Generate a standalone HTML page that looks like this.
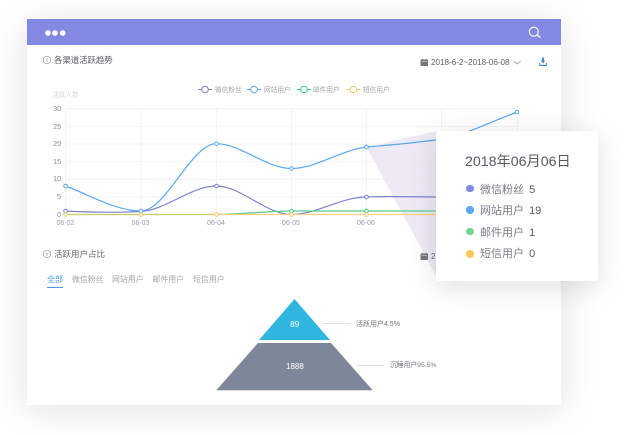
<!DOCTYPE html>
<html><head><meta charset="utf-8">
<style>
html,body{margin:0;padding:0;background:#fff}
#s{position:relative;width:640px;height:435px;overflow:hidden;background:#fff;font-family:"Liberation Sans","Noto Sans CJK SC",sans-serif}
#card{position:absolute;left:27px;top:19px;width:534px;height:386px;background:#fff;box-shadow:0 5px 36px rgba(0,0,0,.12)}
#head{position:absolute;left:27px;top:19px;width:534px;height:26px;background:#8389e3}
svg{position:absolute;left:0;top:0}
#tip{position:absolute;left:436px;top:131px;width:162px;height:150px;background:#fff;border-radius:2px;box-shadow:0 6px 28px rgba(0,0,0,.13)}
.t{position:absolute;white-space:nowrap;line-height:1}
.r{position:absolute;font-size:11px;color:#7a7d87;white-space:nowrap;line-height:16px}
.r b{font-weight:400;color:#565a66;margin-left:2px}
.d{position:absolute;left:30px;width:7.5px;height:7.5px;border-radius:50%}
</style></head><body>
<div id="s">
<div id="card"></div>
<div id="head"></div>
<svg width="640" height="435" viewBox="0 0 640 435" fill="none">
<!-- header -->
<circle cx="48" cy="33" r="2.8" fill="#fff"/><circle cx="55" cy="33" r="2.8" fill="#fff"/><circle cx="62.700" cy="33" r="2.8" fill="#fff"/>
<circle cx="533.800" cy="31.700" r="4.500" stroke="#fff" stroke-width="1.100"/><path d="M537.200 35.200l3.300 2.300" stroke="#fff" stroke-width="1.300"/>
<!-- info icons -->
<circle cx="47" cy="60" r="3.700" stroke="#9a9a9a" stroke-width=".7"/><path d="M47 58.500v3.200" stroke="#888" stroke-width=".7"/>
<circle cx="47" cy="254" r="3.700" stroke="#9a9a9a" stroke-width=".7"/><path d="M47 252.500v3.200" stroke="#888" stroke-width=".7"/>
<!-- calendar -->
<rect x="420.500" y="59.500" width="7.500" height="6.500" rx=".6" fill="#75757a"/><path d="M421.500 61.500h5.500" stroke="#ddd" stroke-width=".6"/><path d="M422.300 58.600v1.500M426.300 58.600v1.500" stroke="#75757a" stroke-width=".8"/>
<path d="M514 61l3.300 3 3.300-3" stroke="#8a8a8e" stroke-width=".8"/>
<!-- download -->
<path d="M543 57.500v4.500" stroke="#3f8fdc" stroke-width="2"/><path d="M540.600 60.500h4.800L543 63.500z" fill="#3f8fdc"/><path d="M539.700 63v2.400h6.600V63" stroke="#3f8fdc" stroke-width="1.100"/>
<!-- legend -->
<g stroke-width="1">
<path d="M198 89.500h4M208 89.500h4" stroke="#7e82cf"/><circle cx="205" cy="89.500" r="3.300" stroke="#7e82cf" fill="#fff"/>
<path d="M247 89.500h4M257 89.500h4" stroke="#5aa9f2"/><circle cx="254" cy="89.500" r="3.300" stroke="#5aa9f2" fill="#fff"/>
<path d="M297 89.500h4M307 89.500h4" stroke="#3ecf85"/><circle cx="304" cy="89.500" r="3.300" stroke="#3ecf85" fill="#fff"/>
<path d="M346.500 89.500h4M356.500 89.500h4" stroke="#f5c663"/><circle cx="353.500" cy="89.500" r="3.300" stroke="#f5c663" fill="#fff"/>
</g>
<!-- grid -->
<g stroke="#f3f3f5" stroke-width="1">
<path d="M65.500 108.500H517.500M65.500 126.500H517.500M65.500 144H517.500M65.500 161.500H517.500M65.500 179.500H517.500M65.500 197H517.500"/>
<path d="M65.500 108.500V214.500M141 108.500V214.500M216.500 108.500V214.500M291.500 108.500V214.500M366.500 108.500V214.500M441.500 108.500V214.500M517.500 108.500V214.500"/>
</g>
<path d="M65 214.500H518" stroke="#e6e6ea" stroke-width="1"/>
<!-- wedge -->
<path d="M366.500 147L437 131V278z" fill="#e6e2f3" fill-opacity=".72"/>
<!-- lines -->
<path d="M65.500 211c25 1.500 50 1.500 75.500 .5C166 210 191 186 216.500 186C241 186 266 214.500 291.500 214.500C316 214.500 341 197 366.500 197C391 196 416 197 441.500 197" stroke="#7e82cf" stroke-width="1.200"/>
<path d="M65.500 186C90 195 116 211 141 211C166 211 191 143.700 216.500 143.700C241 143.700 266 168.500 291.500 168.500C316 168.500 341 150 366.500 147C391 145 416 143 441.500 139C466 135 492 121 517.500 112" stroke="#5aa9f2" stroke-width="1.200"/>
<path d="M216.500 214.500C241 214.500 266 211 291.500 211H520" stroke="#56d08e" stroke-width="1.300"/>
<path d="M65.500 214.500H520" stroke="#f7cf7e" stroke-width="1.200"/>
<path d="M65.500 214.500H216.500" stroke="#c4d468" stroke-width="1.200"/>
<!-- markers -->
<g fill="#fff" stroke-width="1">
<circle cx="65.500" cy="211" r="1.800" stroke="#7e82cf"/><circle cx="216.500" cy="186" r="1.800" stroke="#7e82cf"/><circle cx="366.500" cy="197" r="1.800" stroke="#7e82cf"/>
<circle cx="65.500" cy="186" r="1.800" stroke="#5aa9f2"/><circle cx="141" cy="211" r="1.800" stroke="#5aa9f2"/><circle cx="216.500" cy="143.700" r="1.800" stroke="#5aa9f2"/><circle cx="291.500" cy="168.500" r="1.800" stroke="#5aa9f2"/><circle cx="366.500" cy="147" r="1.800" stroke="#5aa9f2"/><circle cx="517" cy="112" r="1.800" stroke="#5aa9f2"/>
<circle cx="291.500" cy="211" r="1.800" stroke="#3ecf85"/><circle cx="366.500" cy="211" r="1.800" stroke="#3ecf85"/>
<circle cx="65.500" cy="214.500" r="1.800" stroke="#f5c663"/><circle cx="141" cy="214.500" r="1.800" stroke="#f5c663"/><circle cx="216.500" cy="214.500" r="1.800" stroke="#f5c663"/><circle cx="291.500" cy="214.500" r="1.800" stroke="#f5c663"/><circle cx="366.500" cy="214.500" r="1.800" stroke="#f5c663"/>
</g>
<!-- second calendar -->
<rect x="420.500" y="253.500" width="7.500" height="6.500" rx=".6" fill="#75757a"/><path d="M421.500 255.500h5.500" stroke="#ddd" stroke-width=".6"/><path d="M422.300 252.600v1.500M426.300 252.600v1.500" stroke="#75757a" stroke-width=".8"/>
<!-- tab underline -->
<path d="M47 287.500H63" stroke="#4c9be8" stroke-width="1"/>
<!-- pyramid -->
<path d="M294.500 299L330 340H259z" fill="#2fb6df"/>
<path d="M258 343H331L372.500 390H216.500z" fill="#7d8799"/>
<path d="M216.500 390.500H372.500" stroke="#aeb6ca" stroke-width=".6"/>
<path d="M323 323.500H351M357 365.500H384" stroke="#dedede" stroke-width="1"/>
</svg>
<div class="t" style="left:54px;top:56px;font-size:8.400px;color:#55585f">各渠道活跃趋势</div>
<div class="t" style="left:431px;top:59px;font-size:8.100px;color:#5e6068">2018-6-2~2018-06-08</div>
<div class="t" style="left:215px;top:87.500px;font-size:6.700px;color:#a3a5ab">微信粉丝</div>
<div class="t" style="left:264px;top:87.500px;font-size:6.700px;color:#a3a5ab">网站用户</div>
<div class="t" style="left:313px;top:87.500px;font-size:6.700px;color:#a3a5ab">邮件用户</div>
<div class="t" style="left:363px;top:87.500px;font-size:6.700px;color:#a3a5ab">短信用户</div>
<div class="t" style="left:52px;top:93px;font-size:6.700px;color:#d4d5da">活跃人数</div>
<div class="t" style="left:53px;top:105px;font-size:7.500px;color:#8c8f98">30</div>
<div class="t" style="left:53px;top:122.500px;font-size:7.500px;color:#8c8f98">25</div>
<div class="t" style="left:53px;top:140px;font-size:7.500px;color:#8c8f98">20</div>
<div class="t" style="left:53px;top:157.500px;font-size:7.500px;color:#8c8f98">15</div>
<div class="t" style="left:53px;top:175px;font-size:7.500px;color:#8c8f98">10</div>
<div class="t" style="left:57px;top:193px;font-size:7.500px;color:#8c8f98">5</div>
<div class="t" style="left:57px;top:210.500px;font-size:7.500px;color:#8c8f98">0</div>
<div class="t" style="left:56.500px;top:219.500px;font-size:7px;color:#9a9da6">06-02</div>
<div class="t" style="left:131.500px;top:219.500px;font-size:7px;color:#9a9da6">06-03</div>
<div class="t" style="left:207px;top:219.500px;font-size:7px;color:#9a9da6">06-04</div>
<div class="t" style="left:282px;top:219.500px;font-size:7px;color:#9a9da6">06-05</div>
<div class="t" style="left:357px;top:219.500px;font-size:7px;color:#9a9da6">06-06</div>
<div class="t" style="left:54px;top:249.500px;font-size:8.500px;color:#66696f">活跃用户占比</div>
<div class="t" style="left:431px;top:252.500px;font-size:8.100px;color:#5e6068">2</div>
<div class="t" style="left:47px;top:275.500px;font-size:8px;color:#4c9be8">全部</div>
<div class="t" style="left:72px;top:275.500px;font-size:7.900px;color:#a3a5ab">微信粉丝</div>
<div class="t" style="left:112px;top:275.500px;font-size:7.900px;color:#a3a5ab">网站用户</div>
<div class="t" style="left:152.500px;top:275.500px;font-size:7.900px;color:#a3a5ab">邮件用户</div>
<div class="t" style="left:193px;top:275.500px;font-size:7.900px;color:#a3a5ab">短信用户</div>
<div class="t" style="left:290.300px;top:321px;font-size:8px;color:#fff">89</div>
<div class="t" style="left:286px;top:363px;font-size:8px;color:#fff">1888</div>
<div class="t" style="left:356px;top:320.500px;font-size:7px;color:#74767c">活跃用户4.5%</div>
<div class="t" style="left:390px;top:362.500px;font-size:6.800px;color:#74767c">沉睡用户95.5%</div>
<div id="tip">
<div class="t" style="left:29px;top:23.500px;font-size:14.200px;color:#565a66">2018年06月06日</div>
<div class="d" style="top:53.800px;background:#8389e3"></div><div class="r" style="left:44px;top:50.500px">微信粉丝 <b>5</b></div>
<div class="d" style="top:75px;background:#5aa9f2"></div><div class="r" style="left:44px;top:72px">网站用户 <b>19</b></div>
<div class="d" style="top:96.700px;background:#73d695"></div><div class="r" style="left:44px;top:93.500px">邮件用户 <b>1</b></div>
<div class="d" style="top:119px;background:#fdc657"></div><div class="r" style="left:44px;top:115px">短信用户 <b>0</b></div>
</div>
</div>
</body></html>
